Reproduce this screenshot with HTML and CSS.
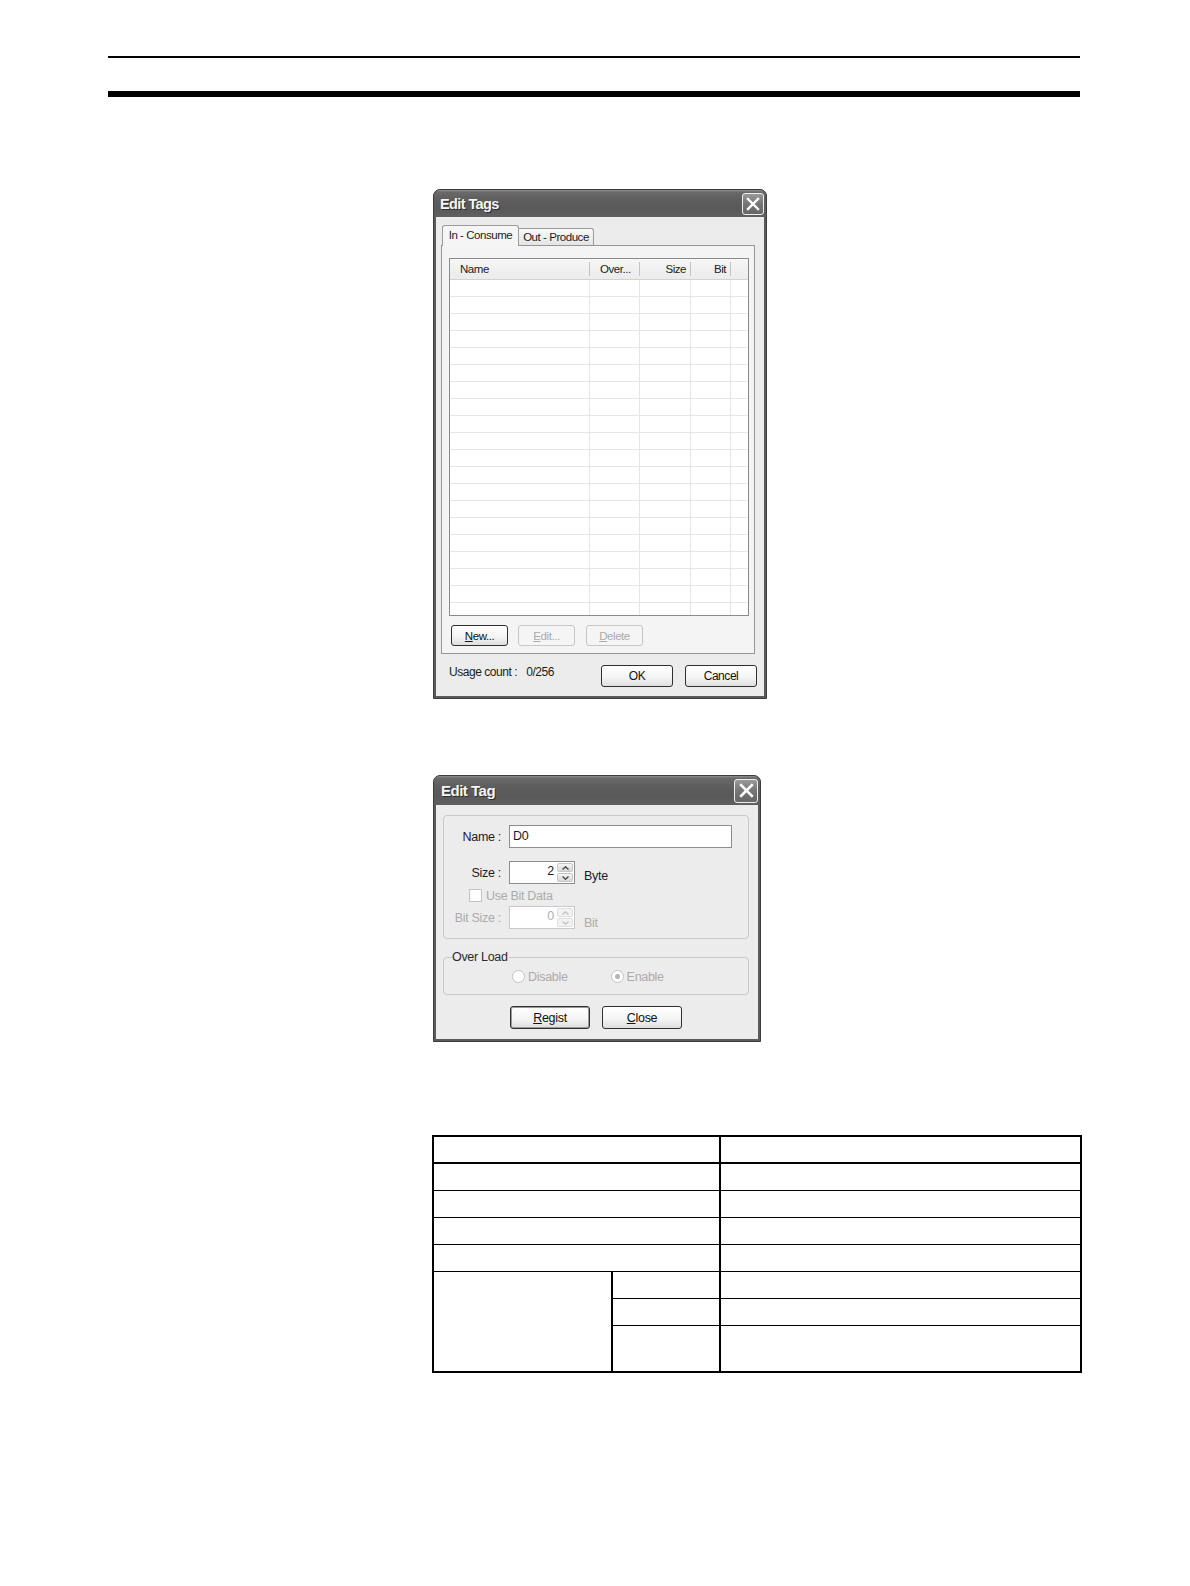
FILE: index.html
```html
<!DOCTYPE html>
<html>
<head>
<meta charset="utf-8">
<title>Edit Tags</title>
<link rel="stylesheet" href="styles.css">
</head>
<body>
<div class="page">
  <div class="rules">
    <div class="rule-thin"></div>
    <div class="rule-thick"></div>
  </div>

  <div class="content">
    <!-- Dialog 1: Edit Tags -->
    <div class="window w1 ui">
      <div class="titlebar">
        <span class="title">Edit Tags</span>
        <span class="close"><svg width="14" height="14" viewBox="0 0 14 14"><path d="M2 2 L12 12 M12 2 L2 12" stroke="#fff" stroke-width="2.4" stroke-linecap="square" fill="none"/></svg></span>
      </div>
      <div class="wbody b1">
        <div class="tabs">
          <div class="tab active">In - Consume</div>
          <div class="tab">Out - Produce</div>
        </div>
        <div class="tabpanel">
          <div class="list">
            <div class="lhead">
              <div class="hc c1">Name</div>
              <div class="hc c2">Over...</div>
              <div class="hc c3 r">Size</div>
              <div class="hc c4 r">Bit</div>
              <div class="hc c5"></div>
            </div>
            <div class="lrows">
              <div class="lrow"><span class="c1"></span><span class="c2"></span><span class="c3"></span><span class="c4"></span><span class="c5"></span></div>
              <div class="lrow"><span class="c1"></span><span class="c2"></span><span class="c3"></span><span class="c4"></span><span class="c5"></span></div>
              <div class="lrow"><span class="c1"></span><span class="c2"></span><span class="c3"></span><span class="c4"></span><span class="c5"></span></div>
              <div class="lrow"><span class="c1"></span><span class="c2"></span><span class="c3"></span><span class="c4"></span><span class="c5"></span></div>
              <div class="lrow"><span class="c1"></span><span class="c2"></span><span class="c3"></span><span class="c4"></span><span class="c5"></span></div>
              <div class="lrow"><span class="c1"></span><span class="c2"></span><span class="c3"></span><span class="c4"></span><span class="c5"></span></div>
              <div class="lrow"><span class="c1"></span><span class="c2"></span><span class="c3"></span><span class="c4"></span><span class="c5"></span></div>
              <div class="lrow"><span class="c1"></span><span class="c2"></span><span class="c3"></span><span class="c4"></span><span class="c5"></span></div>
              <div class="lrow"><span class="c1"></span><span class="c2"></span><span class="c3"></span><span class="c4"></span><span class="c5"></span></div>
              <div class="lrow"><span class="c1"></span><span class="c2"></span><span class="c3"></span><span class="c4"></span><span class="c5"></span></div>
              <div class="lrow"><span class="c1"></span><span class="c2"></span><span class="c3"></span><span class="c4"></span><span class="c5"></span></div>
              <div class="lrow"><span class="c1"></span><span class="c2"></span><span class="c3"></span><span class="c4"></span><span class="c5"></span></div>
              <div class="lrow"><span class="c1"></span><span class="c2"></span><span class="c3"></span><span class="c4"></span><span class="c5"></span></div>
              <div class="lrow"><span class="c1"></span><span class="c2"></span><span class="c3"></span><span class="c4"></span><span class="c5"></span></div>
              <div class="lrow"><span class="c1"></span><span class="c2"></span><span class="c3"></span><span class="c4"></span><span class="c5"></span></div>
              <div class="lrow"><span class="c1"></span><span class="c2"></span><span class="c3"></span><span class="c4"></span><span class="c5"></span></div>
              <div class="lrow"><span class="c1"></span><span class="c2"></span><span class="c3"></span><span class="c4"></span><span class="c5"></span></div>
              <div class="lrow"><span class="c1"></span><span class="c2"></span><span class="c3"></span><span class="c4"></span><span class="c5"></span></div>
              <div class="lrow"><span class="c1"></span><span class="c2"></span><span class="c3"></span><span class="c4"></span><span class="c5"></span></div>
              <div class="lrow"><span class="c1"></span><span class="c2"></span><span class="c3"></span><span class="c4"></span><span class="c5"></span></div>
              <div class="lrow"><span class="c1"></span><span class="c2"></span><span class="c3"></span><span class="c4"></span><span class="c5"></span></div>
            </div>
          </div>
          <div class="pbtns">
            <div class="btn pbtn"><span><u>N</u>ew...</span></div>
            <div class="btn pbtn disabled"><span><u>E</u>dit...</span></div>
            <div class="btn pbtn disabled del"><span><u>D</u>elete</span></div>
          </div>
        </div>
        <div class="footer">
          <span class="usage">Usage count :</span>
          <span class="count">0/256</span>
          <div class="btn fbtn ok">OK</div>
          <div class="btn fbtn cancel">Cancel</div>
        </div>
      </div>
    </div>

    <!-- Dialog 2: Edit Tag -->
    <div class="window w2 ui">
      <div class="titlebar t2">
        <span class="title">Edit Tag</span>
        <span class="close c2x"><svg width="15" height="15" viewBox="0 0 14 14"><path d="M2 2 L12 12 M12 2 L2 12" stroke="#fff" stroke-width="2.4" stroke-linecap="square" fill="none"/></svg></span>
      </div>
      <div class="wbody b2">
        <div class="group">
          <div class="frow">
            <span class="flabel">Name :</span>
            <div class="field name">D0</div>
          </div>
          <div class="frow mt13">
            <span class="flabel">Size :</span>
            <div class="spin">
              <span class="sval">2</span>
              <span class="sbtns">
                <span class="sb"><svg width="7" height="4" viewBox="0 0 7 4"><path d="M0.5 3.5 L3.5 0.8 L6.5 3.5" stroke="#4a4a4a" stroke-width="1.4" fill="none"/></svg></span>
                <span class="sb"><svg width="7" height="4" viewBox="0 0 7 4"><path d="M0.5 0.5 L3.5 3.2 L6.5 0.5" stroke="#4a4a4a" stroke-width="1.4" fill="none"/></svg></span>
              </span>
            </div>
            <span class="unit byte">Byte</span>
          </div>
          <div class="crow">
            <span class="check"></span>
            <span class="dis">Use Bit Data</span>
          </div>
          <div class="frow mt4">
            <span class="flabel dis">Bit Size :</span>
            <div class="spin disabled">
              <span class="sval">0</span>
              <span class="sbtns">
                <span class="sb"><svg width="7" height="4" viewBox="0 0 7 4"><path d="M0.5 3.5 L3.5 0.8 L6.5 3.5" stroke="#c4c4c4" stroke-width="1.4" fill="none"/></svg></span>
                <span class="sb"><svg width="7" height="4" viewBox="0 0 7 4"><path d="M0.5 0.5 L3.5 3.2 L6.5 0.5" stroke="#c4c4c4" stroke-width="1.4" fill="none"/></svg></span>
              </span>
            </div>
            <span class="unit bit dis">Bit</span>
          </div>
        </div>
        <fieldset class="overload">
          <legend>Over Load</legend>
          <div class="rrow">
            <span class="radio"></span><span class="dis rl">Disable</span>
            <span class="radio on en"></span><span class="dis rl">Enable</span>
          </div>
        </fieldset>
        <div class="dbtns">
          <div class="btn dbtn default"><span><u>R</u>egist</span></div>
          <div class="btn dbtn"><span><u>C</u>lose</span></div>
        </div>
      </div>
    </div>

    <table class="spec">
      <colgroup>
        <col class="k1">
        <col class="k2">
        <col class="k3">
      </colgroup>
      <tr class="head"><td colspan="2" class="vr"></td><td></td></tr>
      <tr><td colspan="2" class="vr"></td><td></td></tr>
      <tr><td colspan="2" class="vr"></td><td></td></tr>
      <tr><td colspan="2" class="vr"></td><td></td></tr>
      <tr><td colspan="2" class="vr"></td><td></td></tr>
      <tr><td rowspan="3" class="vr"></td><td class="vr"></td><td></td></tr>
      <tr><td class="vr"></td><td></td></tr>
      <tr class="tall"><td class="vr"></td><td></td></tr>
    </table>
  </div>
</div>
</body>
</html>
```

FILE: styles.css
```css
* { box-sizing: border-box; }

body {
  margin: 0;
  background: #fff;
  font-family: "Liberation Sans", Arial, sans-serif;
}

.page {
  width: 1190px;
  min-height: 1586px;
  padding-top: 56px;
}

.rules {
  margin-left: 108px;
  width: 972px;
}
.rule-thin { height: 2px; background: #000; }
.rule-thick { height: 6px; margin-top: 33px; background: #000; }

.content {
  padding-left: 433px;
  margin-top: 92px;
}

.ui {
  font-family: "Liberation Sans", Arial, sans-serif;
  color: #1c1c1c;
  font-size: 11.5px;
  letter-spacing: -0.45px;
}

/* ---------- window frame ---------- */
.window {
  background: #5b5b5b;
  border: 1px solid #3c3c3c;
  border-radius: 7px 7px 0 0;
  display: flex;
  flex-direction: column;
}
.w1 { width: 334px; height: 510px; }
.w2 { width: 328px; height: 267px; margin-top: 76px; }

.titlebar {
  height: 27px;
  flex: none;
  display: flex;
  align-items: center;
  justify-content: space-between;
  padding: 0 2px 0 6px;
  border-radius: 6px 6px 0 0;
  background: linear-gradient(180deg, #909090 0, #6a6a6a 2px, #5e5e5e 35%, #595959 70%, #606060 100%);
}
.t2 { height: 29px; padding-left: 7px; }

.title {
  color: #f5f5f5;
  font-family: "Liberation Sans", Arial, sans-serif;
  font-weight: bold;
  font-size: 14.5px;
  letter-spacing: -0.6px;
  text-shadow: 1px 1px 0 #2e2e2e;
}
.t2 .title { font-size: 15px; letter-spacing: -0.5px; }

.close {
  width: 22px;
  height: 22px;
  border: 1px solid #eeeeee;
  border-radius: 3px;
  background: linear-gradient(180deg, #9a9a9a 0, #777 45%, #666 100%);
  display: flex;
  align-items: center;
  justify-content: center;
}
.c2x { width: 24px; height: 24px; }

.wbody {
  flex: 1;
  background: #ececec;
  margin: 0 2px 2px;
}

/* ---------- dialog 1 ---------- */
.b1 { padding: 8px 9px 0 5px; }

.tabs {
  display: flex;
  align-items: flex-end;
  height: 20px;
  padding-left: 1px;
}
.tab {
  display: flex;
  align-items: center;
  justify-content: center;
  height: 17px;
  width: 75px;
  border: 1px solid #9c9c9c;
  border-bottom: none;
  border-left: none;
  border-radius: 0 3px 0 0;
  background: linear-gradient(180deg, #fafafa, #e4e4e4);
  white-space: nowrap;
}
.tab.active {
  position: relative;
  z-index: 1;
  width: 77px;
  height: 21px;
  margin-bottom: -1px;
  border-left: 1px solid #9c9c9c;
  border-radius: 3px 3px 0 0;
  background: #f5f5f5;
  padding-bottom: 3px;
}

.tabpanel {
  height: 409px;
  border: 1px solid #969696;
  background: #f4f4f4;
  padding: 12px 4px 0 7px;
}

.list {
  width: 300px;
  height: 358px;
  border: 1px solid #8a8a8a;
  background: #fff;
  overflow: hidden;
}
.lhead {
  display: flex;
  height: 21px;
  border-bottom: 1px solid #d2d2d2;
  background: linear-gradient(180deg, #f6f6f6, #ebebeb);
}
.hc {
  height: 20px;
  line-height: 20px;
  padding: 0 4px 0 10px;
  background: linear-gradient(#c4c4c4, #c4c4c4) right 3px / 1px 14px no-repeat;
  white-space: nowrap;
}
.hc.r { text-align: right; padding: 0 5px 0 0; }
.c1 { width: 140px; flex: none; }
.c2 { width: 50px; flex: none; }
.c3 { width: 51px; flex: none; }
.c4 { width: 40px; flex: none; }
.c5 { flex: 1; }
.hc.c5 { background: none; }

.lrow {
  display: flex;
  height: 17px;
  border-bottom: 1px solid #e6e6e6;
}
.lrow span { border-right: 1px solid #e6e6e6; }
.lrow span.c5 { border-right: none; }

.btn {
  display: flex;
  align-items: center;
  justify-content: center;
  border: 1px solid #2f2f2f;
  border-radius: 3px;
  background: linear-gradient(180deg, #ffffff 0, #f5f5f5 55%, #dedede 100%);
  color: #111;
  white-space: nowrap;
}
.btn.disabled {
  border-color: #c6c6c6;
  color: #ababab;
  background: #f5f5f5;
}

.pbtns {
  display: flex;
  gap: 10px;
  margin-top: 9px;
  padding-left: 2px;
}
.pbtn { width: 57px; height: 21px; }
.pbtn.del { margin-left: 1px; }

.footer {
  display: flex;
  align-items: flex-start;
  padding: 11px 0 0 8px;
}
.usage, .count { line-height: 14px; font-size: 12px; }
.count { margin-left: 9px; }
.fbtn { width: 72px; height: 22px; font-size: 12px; }
.ok { margin-left: auto; }
.cancel { margin-left: 12px; margin-right: -2px; }

/* ---------- dialog 2 ---------- */
.b2 {
  padding: 10px 9px 0 7px;
  font-size: 12.5px;
  letter-spacing: -0.3px;
}
.group {
  height: 124px;
  border: 1px solid #c9c9c9;
  border-radius: 4px;
  padding-top: 9px;
}
.frow {
  display: flex;
  align-items: center;
  height: 23px;
}
.mt13 { margin-top: 13px; }
.mt4 { margin-top: 4px; }
.flabel {
  width: 57px;
  text-align: right;
  margin-right: 8px;
  flex: none;
}
.field {
  height: 23px;
  border: 1px solid #8d8d8d;
  background: #fff;
  padding: 2px 0 0 3px;
  line-height: 16px;
}
.name { width: 223px; }

.spin {
  width: 66px;
  height: 23px;
  border: 1px solid #8d8d8d;
  background: #fff;
  display: flex;
  padding: 1px;
}
.sval {
  flex: 1;
  text-align: right;
  padding-right: 3px;
  line-height: 16px;
}
.sbtns {
  width: 16px;
  display: flex;
  flex-direction: column;
  gap: 1px;
}
.sb {
  flex: 1;
  display: flex;
  align-items: center;
  justify-content: center;
  border-radius: 2px;
  background: linear-gradient(180deg, #f4f4f4, #d8d8d8);
  border: 1px solid #c6c6c6;
}
.spin.disabled { border-color: #c8c8c8; color: #b0b0b0; }
.spin.disabled .sb { background: #f2f2f2; border-color: #e0e0e0; }

.unit {
  align-self: flex-end;
  margin-left: 9px;
  line-height: 14px;
}
.byte { margin-bottom: 1px; }
.bit { margin-bottom: -1px; }

.dis { color: #ababab; }

.crow {
  display: flex;
  align-items: center;
  height: 13px;
  margin-top: 5px;
  padding-left: 25px;
}
.check {
  width: 13px;
  height: 13px;
  border: 1px solid #c4c4c4;
  background: #fff;
  margin-right: 4px;
}

.overload {
  margin: 11px 0 0;
  width: 306px;
  border: 1px solid #c9c9c9;
  border-radius: 4px;
  padding: 6px 0 11px 8px;
  min-inline-size: 0;
}
.overload legend {
  padding: 0 1px 0 0;
  line-height: 14px;
  color: #2a2a2a;
}
.rrow {
  display: flex;
  align-items: center;
  height: 13px;
  margin-left: 60px;
}
.radio {
  width: 13px;
  height: 13px;
  border: 1px solid #c2c2c2;
  border-radius: 50%;
  background: #fff;
  display: flex;
  align-items: center;
  justify-content: center;
}
.radio.on::after {
  content: "";
  width: 5px;
  height: 5px;
  border-radius: 50%;
  background: #b4b4b4;
}
.rl { margin-left: 3px; }
.en { margin-left: 43px; }

.dbtns {
  display: flex;
  justify-content: center;
  gap: 12px;
  margin-top: 11px;
}
.dbtn { width: 80px; height: 23px; }
.dbtn.default { box-shadow: inset 0 0 0 1px #9a9a9a; }

/* ---------- table ---------- */
.spec {
  margin: 93px 0 0 -1px;
  width: 648px;
  border-collapse: collapse;
  border: 2px solid #000;
  table-layout: fixed;
}
.k1 { width: 179px; }
.k2 { width: 108px; }
.k3 { width: 361px; }
.spec td {
  border: 1px solid #000;
  height: 27px;
  padding: 0;
}
.spec td.vr { border-right: 2px solid #000; }
.spec tr.head td { border-bottom: 2px solid #000; }
.spec tr.tall td { height: 47px; }
```
